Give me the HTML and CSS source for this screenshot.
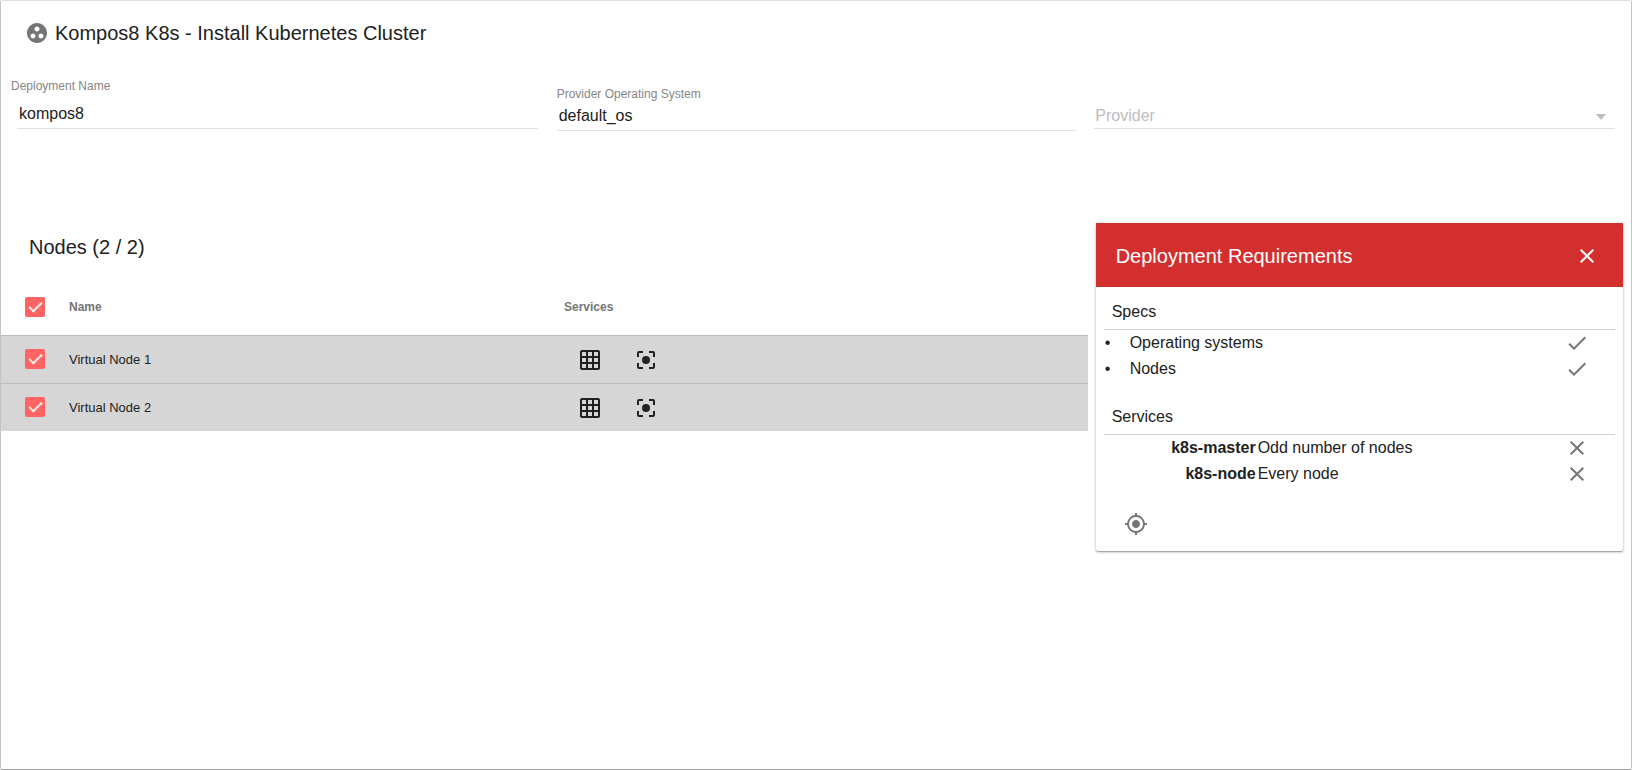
FILE: index.html
```html
<!DOCTYPE html>
<html lang="en">
<head>
<meta charset="utf-8">
<meta name="viewport" content="width=device-width, initial-scale=1">
<title>Kompos8 K8s - Install Kubernetes Cluster</title>
<link rel="stylesheet" href="styles.css">
</head>
<body>
<svg class="sprite" aria-hidden="true">
  <symbol id="i-grid" viewBox="0 0 24 24"><path d="M20 2H4c-1.1 0-2 .9-2 2v16c0 1.1.9 2 2 2h16c1.100 0 2-.9 2-2V4c0-1.100-.9-2-2-2zM8 20H4v-4h4v4zm0-6H4v-4h4v4zm0-6H4V4h4v4zm6 12h-4v-4h4v4zm0-6h-4v-4h4v4zm0-6h-4V4h4v4zm6 12h-4v-4h4v4zm0-6h-4v-4h4v4zm0-6h-4V4h4v4z"/></symbol>
  <symbol id="i-focus" viewBox="0 0 24 24"><path d="M5 15H3v4c0 1.100.9 2 2 2h4v-2H5v-4zM5 5h4V3H5c-1.100 0-2 .9-2 2v4h2V5zm14-2h-4v2h4v4h2V5c0-1.100-.9-2-2-2zm0 16h-4v2h4c1.100 0 2-.9 2-2v-4h-2v4z"/><circle cx="12" cy="12" r="4"/></symbol>
  <symbol id="i-check" viewBox="0 0 24 24"><path d="M9 16.170L4.830 12l-1.420 1.410L9 19 21 7l-1.410-1.410z"/></symbol>
  <symbol id="i-close" viewBox="0 0 24 24"><path d="M19 6.410L17.590 5 12 10.590 6.410 5 5 6.410 10.590 12 5 17.590 6.410 19 12 13.410 17.590 19 19 17.590 13.410 12z"/></symbol>
</svg>
<main class="page">
  <header class="toolbar">
    <svg class="icon muted" viewBox="0 0 24 24" aria-hidden="true"><path d="M12 2C6.480 2 2 6.480 2 12s4.480 10 10 10 10-4.480 10-10S17.520 2 12 2zM8 17.500c-1.380 0-2.500-1.120-2.500-2.500s1.120-2.500 2.500-2.500 2.500 1.120 2.500 2.500-1.120 2.500-2.500 2.500zM9.500 8c0-1.380 1.120-2.500 2.500-2.500s2.500 1.120 2.500 2.500-1.120 2.500-2.500 2.500S9.500 9.380 9.500 8zm6.500 9.500c-1.380 0-2.500-1.120-2.500-2.500s1.120-2.500 2.500-2.500 2.500 1.120 2.500 2.500-1.120 2.500-2.500 2.500z"/></svg>
    <h1 class="title">Kompos8 K8s - Install Kubernetes Cluster</h1>
  </header>

  <form class="fields">
    <div class="field field-name">
      <label for="name">Deployment Name</label>
      <input id="name" type="text" value="kompos8">
    </div>
    <div class="field field-os">
      <label for="os">Provider Operating System</label>
      <input id="os" type="text" value="default_os">
    </div>
    <div class="field field-provider">
      <select id="provider" aria-label="Provider"><option>Provider</option></select>
      <svg class="caret" viewBox="0 0 10 6" aria-hidden="true"><path d="M0 0h10L5 6z"/></svg>
    </div>
  </form>

  <div class="content">
    <section class="nodes">
      <h2 class="title nodes-title">Nodes (2 / 2)</h2>
      <table class="node-table">
        <thead>
          <tr>
            <th class="pick"><input type="checkbox" class="box" checked aria-label="Select all nodes"></th>
            <th class="name">Name</th>
            <th>Services</th>
          </tr>
        </thead>
        <tbody>
          <tr>
            <td class="pick"><input type="checkbox" class="box" id="n1" checked></td>
            <td class="name"><label for="n1">Virtual Node 1</label></td>
            <td><div class="services">
              <button type="button" aria-label="k8s-master"><svg class="icon"><use href="#i-grid"/></svg></button>
              <button type="button" aria-label="k8s-node"><svg class="icon"><use href="#i-focus"/></svg></button>
            </div></td>
          </tr>
          <tr>
            <td class="pick"><input type="checkbox" class="box" id="n2" checked></td>
            <td class="name"><label for="n2">Virtual Node 2</label></td>
            <td><div class="services">
              <button type="button" aria-label="k8s-master"><svg class="icon"><use href="#i-grid"/></svg></button>
              <button type="button" aria-label="k8s-node"><svg class="icon"><use href="#i-focus"/></svg></button>
            </div></td>
          </tr>
        </tbody>
      </table>
    </section>

    <aside class="requirements">
      <header class="req-head">
        <h2 class="title">Deployment Requirements</h2>
        <button type="button" aria-label="Close"><svg class="icon"><use href="#i-close"/></svg></button>
      </header>
      <div class="req-body">
        <h3>Specs</h3>
        <ul class="req-list">
          <li><span class="bullet">•</span><span class="text">Operating systems</span><svg class="icon muted"><use href="#i-check"/></svg></li>
          <li><span class="bullet">•</span><span class="text">Nodes</span><svg class="icon muted"><use href="#i-check"/></svg></li>
        </ul>
        <h3>Services</h3>
        <ul class="req-list">
          <li><strong class="service">k8s-master</strong><span class="text">Odd number of nodes</span><svg class="icon muted"><use href="#i-close"/></svg></li>
          <li><strong class="service">k8s-node</strong><span class="text">Every node</span><svg class="icon muted"><use href="#i-close"/></svg></li>
        </ul>
        <button type="button" class="locate" aria-label="Auto assign"><svg class="icon muted" viewBox="0 0 24 24"><path d="M12 8c-2.210 0-4 1.790-4 4s1.790 4 4 4 4-1.790 4-4-1.790-4-4-4zm8.940 3A8.994 8.994 0 0 0 13 3.060V1h-2v2.060A8.994 8.994 0 0 0 3.060 11H1v2h2.060A8.994 8.994 0 0 0 11 20.940V23h2v-2.060A8.994 8.994 0 0 0 20.940 13H23v-2h-2.060zM12 19c-3.870 0-7-3.130-7-7s3.130-7 7-7 7 3.130 7 7-3.130 7-7 7z"/></svg></button>
      </div>
    </aside>
  </div>
</main>
</body>
</html>
```
FILE: styles.css
```css
*, *::before, *::after { box-sizing: border-box; }

body {
  margin: 0;
  background: #fff;
  color: #212121;
  font: 16px/24px "Liberation Sans", Arial, sans-serif;
}

h1, h2, h3, ul { margin: 0; padding: 0; }

button {
  padding: 0;
  border: 0;
  background: none;
  color: inherit;
  display: flex;
}

.sprite { display: none; }

.icon {
  width: 24px;
  height: 24px;
  flex: none;
  fill: currentColor;
}

.muted { color: #757575; }

.title {
  font-size: 20px;
  font-weight: 400;
}

.page {
  min-height: 100vh;
  border: 1px solid #c4c4c4;
  border-top-color: #e0e0e0;
  border-bottom-color: #9e9e9e;
  border-radius: 2px;
}

.toolbar {
  display: flex;
  align-items: center;
  gap: 6px;
  height: 64px;
  padding: 0 24px;
}

.fields {
  display: grid;
  grid-template-columns: repeat(3, 1fr);
  gap: 18px;
  height: 150px;
  padding: 0 16px;
}

.field {
  position: relative;
  display: flex;
  flex-direction: column;
  align-items: stretch;
  align-self: start;
}

.field label {
  color: #858585;
  font-size: 12px;
  line-height: 18px;
}

.field input,
.field select {
  width: 100%;
  height: 28px;
  padding: 0 2px 2px;
  border: 0;
  border-bottom: 1px solid #e0e0e0;
  border-radius: 0;
  outline: 0;
  background: none;
  color: inherit;
  font: inherit;
}

.field-name { padding-top: 12px; }
.field-name label { margin: 0 0 6px -6px; }
.field-os { padding: 20px 0 0 1px; }
.field-provider { padding-top: 36px; }

.field select {
  padding: 2px 1px 0;
  appearance: none;
  color: #bdbdbd;
}

.caret {
  position: absolute;
  right: 9px;
  bottom: 9px;
  width: 10px;
  height: 6px;
  fill: #bdbdbd;
}

.content {
  display: grid;
  grid-template-columns: 2fr 1fr;
  align-items: start;
}

.nodes-title {
  padding: 20px 28px;
}

.node-table {
  width: 100%;
  table-layout: fixed;
  border-collapse: collapse;
  font-size: 13px;
}

.node-table th {
  height: 56px;
  padding: 0;
  color: #757575;
  font-size: 12px;
  text-align: left;
}

.node-table td {
  height: 48px;
  padding: 1px 0 0;
  border-top: 1px solid #bdbdbd;
  background: #d6d6d6;
}

.node-table .pick {
  width: 68px;
  padding: 0 0 0 24px;
}

.node-table .name { width: 495px; }

.box {
  display: block;
  position: relative;
  width: 20px;
  height: 20px;
  margin: 0;
  appearance: none;
  border-radius: 2px;
  background: #ff6464;
}

.box:checked::after {
  content: "";
  position: absolute;
  left: 7px;
  top: 2px;
  width: 7px;
  height: 13px;
  border: solid #fff0f0;
  border-width: 0 2px 2px 0;
  transform: rotate(45deg);
}

.services {
  display: flex;
  gap: 32px;
  padding-left: 14px;
}

.requirements {
  margin: 8px 8px 0;
  border-radius: 2px;
  box-shadow: 0 1px 3px rgba(0, 0, 0, .3), 0 1px 1px rgba(0, 0, 0, .2);
}

.req-head {
  display: flex;
  align-items: center;
  justify-content: space-between;
  height: 64px;
  padding: 1px 24px 0 20px;
  background: #d32f2f;
  color: #fff;
}

.req-body { padding: 8px; }

.req-body h3 {
  height: 35px;
  padding: 5px 8px;
  border-bottom: 1px solid #cfcfcf;
  font-size: 16px;
  font-weight: 400;
}

.req-list {
  margin-bottom: 18px;
  list-style: none;
}

.req-list li {
  display: flex;
  align-items: center;
  height: 26px;
  padding-right: 26px;
}

.req-list .text { flex: 1; }

.bullet {
  width: 26px;
  padding-left: 1px;
}

.service {
  width: 154px;
  padding-right: 2px;
  text-align: right;
}

.locate {
  margin: 25px 0 7px 20px;
}
```
